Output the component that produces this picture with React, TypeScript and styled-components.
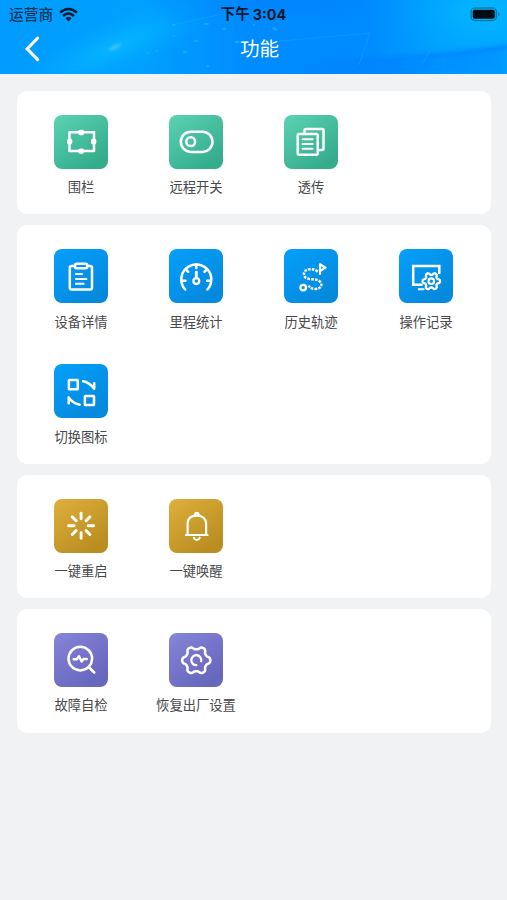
import React from 'react';
import styled, { createGlobalStyle } from 'styled-components';

const GlobalStyle = createGlobalStyle`
  * { box-sizing: border-box; }
  body {
    margin: 0;
    background: #f0f2f4;
    font-family: "Liberation Sans", "Noto Sans CJK SC", sans-serif;
  }
`;

const Page = styled.div`
  min-height: 900px;
  background: #f0f2f4;
`;

const Header = styled.header`
  position: relative;
  height: 74px;
  overflow: hidden;
  background: #0090ff;
`;

const HeaderArt = styled.svg`
  position: absolute;
  inset: 0;
  display: block;
`;

const StatusBar = styled.div`
  position: relative;
  display: grid;
  grid-template-columns: 1fr auto 1fr;
  align-items: center;
  height: 27px;
  padding: 0 6px 0 9px;
  color: #06192b;
`;

const Carrier = styled.div`
  display: flex;
  align-items: center;
  gap: 6px;
  font: 500 14.7px/26px "Noto Sans CJK SC", sans-serif;
  color: #0b3658;
`;

const Clock = styled.div`
  display: flex;
  gap: 3px;
  margin-right: 3px;
  font: 700 14.4px/27px Inter, "Noto Sans CJK SC", sans-serif;
  color: #06192b;
  white-space: nowrap;
`;

const Digits = styled.span`
  padding-top: 1px;
`;

const BatterySlot = styled.div`
  display: flex;
  justify-content: flex-end;
`;

const NavBar = styled.div`
  position: relative;
  display: grid;
  grid-template-columns: 60px 1fr 60px;
  align-items: center;
  height: 42px;
  padding-left: 12px;
`;

const BackButton = styled.button`
  display: flex;
  padding: 0 0 0 12px;
  border: 0;
  background: none;
  color: #fff;
`;

const Title = styled.h1`
  margin: 0;
  text-align: center;
  font: 400 19.6px/40px "Noto Sans CJK SC", sans-serif;
  color: #fff;
`;

const Sections = styled.main`
  display: flex;
  flex-direction: column;
  gap: 11px;
  padding: 17px 16px 0 17px;
`;

const Card = styled.section<{ $rows: number }>`
  display: grid;
  grid-template-columns: repeat(4, 115px);
  grid-auto-rows: 115px;
  padding: 8.5px 7px 0 6.5px;
  height: ${(p) => (p.$rows - 1) * 115 + 123.4}px;
  border-radius: 10px;
  background: #fff;
`;

const Item = styled.div`
  display: flex;
  flex-direction: column;
  align-items: center;
  padding-top: 15.3px;
`;

const Tile = styled.div<{ $from: string; $to: string }>`
  display: flex;
  width: 54px;
  height: 54px;
  border-radius: 8px;
  background: linear-gradient(145deg, ${(p) => p.$from}, ${(p) => p.$to} 85%);
`;

const Label = styled.span`
  margin-top: 7.5px;
  font: 400 13.3px/22px "Noto Sans CJK SC", sans-serif;
  color: #48494b;
  white-space: nowrap;
`;

const Glyph = styled.svg`
  width: 54px;
  height: 54px;
  fill: none;
  stroke: #fff;
  stroke-width: 2.5;
  stroke-linecap: round;
  stroke-linejoin: round;
`;

function gearPath(cx: number, cy: number, radius: number, depth: number) {
  const points: string[] = [];
  for (let i = 0; i < 120; i++) {
    const a = (i / 120) * Math.PI * 2;
    const wave = Math.tanh(1.5 * Math.cos(6 * a)) / Math.tanh(1.5);
    const r = radius + depth * wave;
    points.push(`${(cx + r * Math.cos(a)).toFixed(2)} ${(cy + r * Math.sin(a)).toFixed(2)}`);
  }
  return `M${points.join('L')}Z`;
}

const spokes = [0, 45, 90, 135, 180, 225, 270, 315];

const icons: Record<string, React.ReactNode> = {
  fence: (
    <>
      <path d="M15.5 17.3H40V36H15.5Z" />
      <g fill="#fff" stroke="none">
        <rect x="24.3" y="14.8" width="5.8" height="5.4" rx="1.8" />
        <rect x="24.3" y="33.4" width="5.8" height="5.4" rx="1.8" />
        <rect x="13" y="23.8" width="5.3" height="5.8" rx="1.8" />
        <rect x="37" y="23.8" width="5.3" height="5.8" rx="1.8" />
      </g>
    </>
  ),
  toggle: (
    <>
      <rect x="11.8" y="16.7" width="31.7" height="20.2" rx="10.1" />
      <circle cx="21.7" cy="26.7" r="4.4" />
    </>
  ),
  documents: (
    <>
      <path d="M20.5 18V15.5Q20.5 14 22 14H38Q39.5 14 39.5 15.5V33.5Q39.5 35 38 35H35" />
      <rect x="13.7" y="19" width="20" height="20.7" rx="1.5" />
      <path d="M18.6 24.2H28.6M18.6 29H28.6M18.6 33.8H28.6" strokeWidth="2.1" />
    </>
  ),
  clipboard: (
    <>
      <path d="M20.8 17H17.8Q15.8 17 15.8 19V38.8Q15.8 40.6 17.8 40.6H36Q38 40.6 38 38.8V19Q38 17 36 17H33.4" />
      <rect x="20.9" y="14.8" width="12.4" height="4.4" rx="2" />
      <path d="M22 25H28M22 30H32.4M22 34.8H29.6" strokeWidth="2.1" />
    </>
  ),
  gauge: (
    <>
      <path d="M16.2 40.5A15 15 0 1 1 38.4 40.5" />
      <path d="M27.3 15.5V19M16.9 20.5L19.2 22.8M37.7 20.5L35.4 22.8M12.9 31.7H16.5M41.7 31.7H38.1" />
      <path d="M27.3 23.2V28.8" strokeWidth="2.8" />
      <circle cx="27.3" cy="32.1" r="2.9" strokeWidth="2.3" />
    </>
  ),
  route: (
    <>
      <circle cx="19.2" cy="38.6" r="2.8" strokeWidth="2.3" />
      <path d="M36 25V15.3L41.4 18.7L36 22.2" strokeWidth="2.2" />
      <path
        d="M33.6 22.7Q30 19.7 25.5 20.2C20.5 20.6 18.5 24.5 21 28C23.5 31.4 32 29 35.8 32.4C39.5 36.4 36.2 40 31.5 40Q26.7 40 24.5 36.6"
        strokeWidth="2.5"
        strokeDasharray="2.6 1.2"
        strokeLinecap="butt"
      />
    </>
  ),
  monitor: (
    <>
      <path d="M22.5 35.7H14.2V16.9H40.3V24" strokeLinejoin="miter" />
      <path d="M19.7 40.3H24.6" strokeWidth="2.1" />
      <path d={gearPath(32.3, 32.2, 7.5, 1.2)} strokeWidth="2.3" />
      <circle cx="32.3" cy="32.2" r="2.8" strokeWidth="2.1" />
    </>
  ),
  swap: (
    <>
      <rect x="14.9" y="16.1" width="8.9" height="9.2" rx=".6" />
      <rect x="30.9" y="32" width="9.1" height="9.1" rx=".6" />
      <path d="M29 17.2C33.5 17.8 37 20.5 40.2 24.8V19.2" />
      <path d="M25.7 40.7C21 40.1 17.7 37.8 14.7 33.4V39.2" />
    </>
  ),
  restart: (
    <>
      {spokes.map((angle) => (
        <path key={angle} d="M27.1 14.2V19.7" strokeWidth="2.9" transform={`rotate(${angle} 27.1 26.7)`} />
      ))}
    </>
  ),
  bell: (
    <>
      <path d="M17 36H38.6M18.6 35.8V24.9C18.6 19.7 22 16.6 27.8 16.6S37.1 19.7 37.1 24.9V35.8" strokeWidth="2.2" />
      <path d="M26 15.5Q26.2 14 27.8 14T29.6 15.5" strokeWidth="2.4" />
      <path d="M25 38.8Q25.9 41 27.8 41T30.6 38.8" strokeWidth="2.2" />
    </>
  ),
  diagnose: (
    <>
      <circle cx="26.3" cy="25.6" r="11.8" />
      <path d="M35.2 34.6L40.2 39.5" strokeWidth="2.7" />
      <path d="M19.7 26.3H22.7L25 23.3L27.6 28.5L29.5 26H32.8" />
    </>
  ),
  reset: (
    <>
      <path d={gearPath(27.3, 27.3, 12.5, 1.55)} />
      <path d="M27.3 32.2A5 5 0 1 1 32.2 28.2" strokeWidth="2.3" />
    </>
  ),
};

const sections = [
  { from: '#5bd2b2', to: '#35ad8c', rows: 1, items: [['fence', '围栏'], ['toggle', '远程开关'], ['documents', '透传']] },
  {
    from: '#04a0fb', to: '#0589dd', rows: 2,
    items: [['clipboard', '设备详情'], ['gauge', '里程统计'], ['route', '历史轨迹'], ['monitor', '操作记录'], ['swap', '切换图标']],
  },
  { from: '#deb03c', to: '#b98d20', rows: 1, items: [['restart', '一键重启'], ['bell', '一键唤醒']] },
  { from: '#8784d9', to: '#6667bd', rows: 1, items: [['diagnose', '故障自检'], ['reset', '恢复出厂设置']] },
];

function HeaderBackground() {
  return (
    <HeaderArt width="507" height="74" viewBox="0 0 507 74" preserveAspectRatio="none" aria-hidden="true">
      <defs>
        <linearGradient id="sky" x1="0" y1="0" x2="1" y2="0">
          <stop offset="0" stopColor="#009cff" />
          <stop offset=".28" stopColor="#00a0ff" />
          <stop offset=".5" stopColor="#008bff" />
          <stop offset=".72" stopColor="#008aff" />
          <stop offset=".86" stopColor="#00a2ff" />
          <stop offset="1" stopColor="#00aaff" />
        </linearGradient>
        <radialGradient id="glow">
          <stop offset="0" stopColor="#08bbff" stopOpacity=".8" />
          <stop offset=".5" stopColor="#04b2ff" stopOpacity=".4" />
          <stop offset="1" stopColor="#00a9ff" stopOpacity="0" />
        </radialGradient>
        <linearGradient id="dusk" x1="0" y1="0" x2="1" y2="0">
          <stop offset="0" stopColor="#007dff" stopOpacity="0" />
          <stop offset=".5" stopColor="#007dff" stopOpacity=".45" />
          <stop offset="1" stopColor="#007dff" stopOpacity="0" />
        </linearGradient>
        <linearGradient id="shade" x1="0" y1="0" x2="1" y2="0">
          <stop offset="0" stopColor="#007bff" stopOpacity="0" />
          <stop offset=".5" stopColor="#0082ff" stopOpacity=".65" />
          <stop offset="1" stopColor="#0091ff" stopOpacity=".7" />
        </linearGradient>
        <filter id="soft" x="-20%" y="-50%" width="140%" height="200%"><feGaussianBlur stdDeviation="3" /></filter>
        <filter id="haze" x="-10%" y="-100%" width="120%" height="300%"><feGaussianBlur stdDeviation="1.2" /></filter>
      </defs>
      <rect width="507" height="74" fill="url(#sky)" />
      <ellipse cx="115" cy="47" rx="115" ry="30" fill="url(#glow)" transform="rotate(-24 115 47)" />
      <ellipse cx="482" cy="12" rx="85" ry="48" fill="url(#glow)" />
      <path d="M130 -8H400L330 17L254 9L175 25Z" fill="url(#dusk)" filter="url(#soft)" />
      <path d="M300 61Q400 58 507 44V76H285Z" fill="url(#shade)" filter="url(#soft)" />
      <path d="M345 61Q430 57 507 45V50Q430 61 345 61Z" fill="#007eff" opacity=".4" filter="url(#haze)" />
      <path d="M172 25L236 11M280 41L370 33L359 65M430 50L423 63" fill="none" stroke="#23b5ff" strokeWidth="1" opacity=".3" />
      <ellipse cx="115" cy="47" rx="7" ry="2" fill="#4cc5ff" opacity=".7" transform="rotate(-28 115 47)" filter="url(#haze)" />
      <g fill="#2bb9ff" opacity=".55">
        <ellipse cx="174" cy="25" rx="1.8" ry="1" />
        <ellipse cx="206" cy="24" rx="3" ry="1.3" />
        <ellipse cx="224" cy="29" rx="2" ry="1" />
        <ellipse cx="196" cy="41" rx="2.5" ry="1.1" />
        <ellipse cx="185" cy="52" rx="2" ry="1.2" />
        <ellipse cx="208" cy="66" rx="2" ry="1" />
        <ellipse cx="148" cy="53" rx="1.5" ry=".8" />
        <ellipse cx="157" cy="51" rx="1.5" ry=".8" />
        <ellipse cx="174" cy="36" rx="1.5" ry=".8" />
        <ellipse cx="237" cy="42" rx="2.5" ry="1.2" />
        <ellipse cx="254" cy="25" rx="1.5" ry="1" />
        <ellipse cx="275" cy="29" rx="3" ry="1.3" transform="rotate(25 275 29)" />
      </g>
    </HeaderArt>
  );
}

export default function App() {
  return (
    <Page>
      <GlobalStyle />
      <Header>
        <HeaderBackground />
        <StatusBar>
          <Carrier>
            运营商
            <svg width="19" height="15" viewBox="0 0 19 15" fill="none" stroke="#06192b" strokeWidth="2.5">
              <path d="M1.1 5.6Q9.5-1.6 17.9 5.6M4 9Q9.5 4.1 15 9" />
              <path d="M6.4 11.3Q9.5 8.7 12.6 11.3L9.5 14.5Z" fill="#06192b" stroke="none" />
            </svg>
          </Carrier>
          <Clock><span>下午</span><Digits>3:04</Digits></Clock>
          <BatterySlot>
            <svg width="32" height="15" viewBox="0 0 32 15">
              <rect x="2.1" y="1.1" width="25.3" height="12.3" rx="3.7" fill="none" stroke="#087caf" strokeWidth="1.5" />
              <rect x="3.7" y="2.8" width="22.1" height="9" rx="2" fill="#000c13" />
              <path d="M29.2 5.2Q32 7.2 29.2 9.5Z" fill="#087caf" />
            </svg>
          </BatterySlot>
        </StatusBar>
        <NavBar>
          <BackButton aria-label="返回">
            <svg width="17" height="27" viewBox="0 0 17 27" fill="none" stroke="currentColor" strokeWidth="3" strokeLinecap="round">
              <path d="M13.7 3L3.1 13.9L13.7 24.6" />
            </svg>
          </BackButton>
          <Title>功能</Title>
        </NavBar>
      </Header>
      <Sections>
        {sections.map((section) => (
          <Card key={section.from} $rows={section.rows}>
            {section.items.map(([icon, label]) => (
              <Item key={icon}>
                <Tile $from={section.from} $to={section.to}>
                  <Glyph viewBox="0 0 54 54">{icons[icon]}</Glyph>
                </Tile>
                <Label>{label}</Label>
              </Item>
            ))}
          </Card>
        ))}
      </Sections>
    </Page>
  );
}
